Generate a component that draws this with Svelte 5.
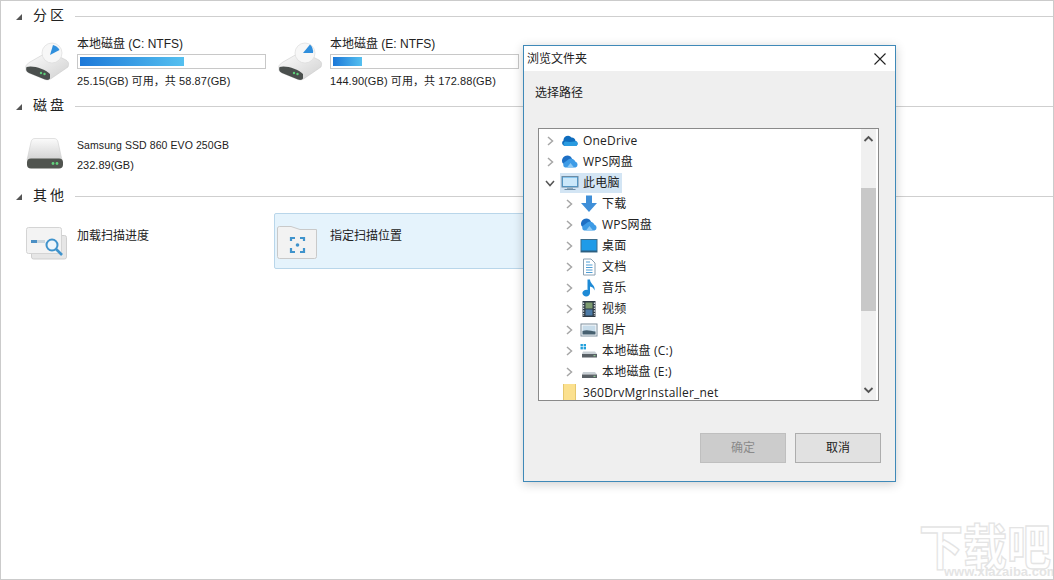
<script>
  const parts = [
    { name: '本地磁盘 (C: NTFS)', pct: 56.8, sub: '25.15(GB) 可用，共 58.87(GB)', wedge: 'M26 13 L29 3 A10 10 0 0 1 35.500 8 Z' },
    { name: '本地磁盘 (E: NTFS)', pct: 15.7, sub: '144.90(GB) 可用，共 172.88(GB)', wedge: 'M26 11 L33 2.500 A10 10 0 0 1 36 11 Z' }
  ];
  const rows = [
    { level: 0, kind: 'onedrive', label: 'OneDrive' },
    { level: 0, kind: 'wps', label: 'WPS网盘' },
    { level: 0, kind: 'pc', label: '此电脑', open: true, selected: true },
    { level: 1, kind: 'down', label: '下载' },
    { level: 1, kind: 'wps', label: 'WPS网盘' },
    { level: 1, kind: 'desk', label: '桌面' },
    { level: 1, kind: 'doc', label: '文档' },
    { level: 1, kind: 'music', label: '音乐' },
    { level: 1, kind: 'video', label: '视频' },
    { level: 1, kind: 'pic', label: '图片' },
    { level: 1, kind: 'drivec', label: '本地磁盘 (C:)' },
    { level: 1, kind: 'drivee', label: '本地磁盘 (E:)' },
    { level: 0, kind: 'folder', label: '360DrvMgrInstaller_net', leaf: true }
  ];
</script>

{#snippet tri()}
  <svg class="tri" width="6" height="6" viewBox="0 0 6 6"><path d="M0 6 L6 0 V6 Z" fill="#555" /></svg>
{/snippet}

{#snippet head(title)}
  <div class="head">
    {@render tri()}
    <span class="htitle">{title}</span>
    <span class="hline"></span>
  </div>
{/snippet}

{#snippet treeIcon(kind)}
  <svg class="ti" width="18" height="18" viewBox="0 0 18 18">
    {#if kind === 'onedrive'}
      <path d="M3.500 14 A3 3 0 0 1 2.500 8.500 A4.500 4.500 0 0 1 10.500 5.500 A4 4 0 0 1 14.500 9 A2.600 2.600 0 0 1 15 14 Z" fill="#0f6cbd" />
      <path d="M3.500 14 A2.800 2.800 0 0 1 4 9.500 L9 10 L15 9.200 A2.600 2.600 0 0 1 15 14 Z" fill="#2a9be0" />
    {:else if kind === 'wps'}
      <path d="M1.500 10 A5 5 0 0 1 11 5.500 L9 9 L6 13 Z" fill="#1d6fc4" />
      <path d="M4 14.500 A3 3 0 0 1 4 9 L8 6 A4.800 4.800 0 0 1 14.500 8.800 A3 3 0 0 1 14.500 14.500 Z" fill="#3d9be6" />
      <path d="M6 14.500 L9.500 10 L13 14.500 Z" fill="#8cc8f3" />
    {:else if kind === 'pc'}
      <rect x="1" y="2.500" width="16" height="10.500" fill="#3ea0e0" stroke="#6d8ba3" stroke-width="1" />
      <rect x="2" y="3.500" width="14" height="8.500" fill="#cbe8fa" />
      <rect x="6" y="13.500" width="6" height="1.500" fill="#8fa9bb" />
      <rect x="3.500" y="15" width="11" height="1" fill="#6d8ba3" />
    {:else if kind === 'down'}
      <path d="M6 0.500 H12 V8 H17 L9 17 L1 8 H6 Z" fill="#3f8fd8" />
    {:else if kind === 'desk'}
      <rect x="1" y="2.500" width="16" height="12.500" fill="#1f9be8" stroke="#3c6d8c" stroke-width="1" />
      <rect x="1" y="13.500" width="16" height="1.500" fill="#2d5f80" />
    {:else if kind === 'doc'}
      <path d="M3.500 1 H11 L15 5 V17 H3.500 Z" fill="#fff" stroke="#8aa0b2" />
      <path d="M6 4 H10 M6 7 H12.500 M6 9.500 H12.500 M6 12 H12.500 M6 14.500 H12.500" stroke="#4f9ed6" stroke-width="1" />
    {:else if kind === 'music'}
      <path d="M7.500 0.500 H10 C10 5 15.500 6 14.500 11.500 C13.500 8.500 12 8 10 7.500 V14 A3.800 3.300 0 1 1 7.500 11 Z" fill="#1e8ad6" />
    {:else if kind === 'video'}
      <rect x="2.500" y="1" width="13" height="16" fill="#2f3b45" />
      <rect x="5.500" y="2.500" width="7" height="6" fill="#7d9b70" />
      <rect x="5.500" y="9.500" width="7" height="6" fill="#4d7ba6" />
      <path d="M3.500 2.500 V16 M14.500 2.500 V16" stroke="#cfd6dc" stroke-width="1.400" stroke-dasharray="1.400 1.200" />
    {:else if kind === 'pic'}
      <rect x="1" y="3" width="16" height="12" fill="#fff" stroke="#7f909e" />
      <rect x="2.500" y="4.500" width="13" height="9" fill="#c7dcea" />
      <path d="M2.500 13.500 V10 C7 8 11 10 15.500 10.500 V13.500 Z" fill="#47606f" />
    {:else if kind === 'drivec'}
      <rect x="0.500" y="2" width="2.400" height="2.400" fill="#22a0dc" /><rect x="3.600" y="2" width="2.400" height="2.400" fill="#22a0dc" />
      <rect x="0.500" y="5" width="2.400" height="2.400" fill="#22a0dc" /><rect x="3.600" y="5" width="2.400" height="2.400" fill="#22a0dc" />
      <path d="M3 9.500 H15 L17 12 H2 Z" fill="#c9d0d5" />
      <rect x="2" y="12" width="15" height="3.500" fill="#5a6166" />
      <rect x="13.500" y="13.200" width="2" height="1" fill="#9fe0a0" />
    {:else if kind === 'drivee'}
      <path d="M3 9 H15 L17 11.500 H2 Z" fill="#c9d0d5" />
      <rect x="2" y="11.500" width="15" height="3.500" fill="#5a6166" />
      <rect x="13.500" y="12.800" width="2" height="1" fill="#9fe0a0" />
    {:else}
      <path d="M2 0 H15 V18 H2 Z" fill="#fbe08e" />
      <path d="M2 0 H3 V18 H2 Z M14 0 H15 V18 H14 Z" fill="#e5c76d" />
    {/if}
  </svg>
{/snippet}

<div class="page">
  <section>
    {@render head('分区')}
    <div class="items">
      {#each parts as p}
        <div class="item">
          <svg class="ico part-ico" width="48" height="40" viewBox="0 0 48 40">
            <defs>
              <linearGradient id="hd" x1="0" y1="0" x2="1" y2="1">
                <stop offset="0" stop-color="#fdfdfd" /><stop offset="1" stop-color="#d0d0d0" />
              </linearGradient>
            </defs>
            <path d="M2 26 C1 24 3 22 6 20 L20 12 C23 10.500 26 11 30 12 L42 18 C45 20 45 22 44 25 L28 36 C26 37.500 24 38.500 21 37.500 L5 31 C2.500 30 1.500 28 2 26 Z" fill="url(#hd)" stroke="#c4c4c4" stroke-width=".5" />
            <path d="M2.500 25 C9 23 21 27 26 32 L26 36.500 C24 38.500 23 38 21 37.500 L5 31 C2.500 30 1.500 28 2.500 25 Z" fill="#4a4f4d" />
            <circle cx="17" cy="31" r="1.200" fill="#5fd07a" />
            <circle cx="20.500" cy="32" r="1.200" fill="#5fd07a" />
            <circle cx="28" cy="11" r="10" fill="#f7f7f7" stroke="#dcdcdc" stroke-width=".7" />
            <path d={p.wedge} fill="#2f8fdd" />
          </svg>
          <div class="txt part-txt">
            <div class="name">{p.name}</div>
            <div class="bar"><span class="fill" style="width:{p.pct}%"></span></div>
            <div class="sub">{p.sub}</div>
          </div>
        </div>
      {/each}
    </div>
  </section>

  <section>
    {@render head('磁盘')}
    <div class="items">
      <div class="item">
        <svg class="ico disk-ico" width="38" height="32" viewBox="0 0 38 32">
          <defs>
            <linearGradient id="dk" x1="0" y1="0" x2="0" y2="1">
              <stop offset="0" stop-color="#fbfbfb" /><stop offset="1" stop-color="#d2d2d2" />
            </linearGradient>
          </defs>
          <path d="M5 4 C5.500 1.500 7 .5 9 .5 H28 C30 .5 31.500 1.500 32 4 L36 22 H1 Z" fill="url(#dk)" stroke="#cfcfcf" stroke-width=".6" />
          <rect x="1" y="20.500" width="36" height="10" rx="4" fill="#50544f" />
          <circle cx="27" cy="25.500" r="1.400" fill="#62d27d" />
          <circle cx="31" cy="25.500" r="1.400" fill="#62d27d" />
        </svg>
        <div class="txt disk-txt">
          <div class="dname">Samsung SSD 860 EVO 250GB</div>
          <div class="dsub">232.89(GB)</div>
        </div>
      </div>
    </div>
  </section>

  <section>
    {@render head('其他')}
    <div class="items">
      <div class="item">
        <svg class="ico other-ico" width="42" height="34" viewBox="0 0 42 34">
          <rect x="6.500" y="9.500" width="35" height="23.500" rx="2" fill="#e6e6e6" stroke="#cfcfcf" />
          <rect x="1.500" y="1.500" width="35" height="26" rx="2" fill="#f3f3f3" stroke="#d4d4d4" />
          <rect x="6" y="14" width="6" height="3" fill="#4a8fc4" />
          <rect x="12" y="14" width="8" height="3" fill="#c9d5dd" />
          <circle cx="27" cy="19" r="5.500" fill="#eef6fb" stroke="#3f93cc" stroke-width="2" />
          <path d="M31 23 L37 29" stroke="#3f93cc" stroke-width="2.600" />
        </svg>
        <div class="txt other-txt">加载扫描进度</div>
      </div>
      <div class="item active">
        <svg class="ico other-ico folder-ico" width="42" height="34" viewBox="0 0 42 34">
          <path d="M.5 2 A2 2 0 0 1 2.500 .5 H14 L23 3.500 H39.500 V30.500 A2 2 0 0 1 37.500 32.500 H2.500 A2 2 0 0 1 .5 30.500 Z" fill="#f2f2f2" stroke="#c9c9c9" />
          <path d="M14 15 V12 H18 M23 12 H27 V15 M14 22 V26 H18 M23 26 H27 V22" fill="none" stroke="#3f93cc" stroke-width="2.200" />
          <circle cx="20.500" cy="19" r="1.800" fill="#3f93cc" />
        </svg>
        <div class="txt other-txt">指定扫描位置</div>
      </div>
    </div>
  </section>

  <div class="mark" aria-hidden="true">
    <div class="mark-big">下载吧</div>
    <div class="mark-url">www.xiazaiba.com</div>
  </div>

  <div class="dialog">
    <div class="dtitle">
      <span>浏览文件夹</span>
      <svg width="12" height="12" viewBox="0 0 12 12"><path d="M.5 .5 L11.500 11.500 M11.500 .5 L.5 11.500" stroke="#222" stroke-width="1.100" /></svg>
    </div>
    <div class="dbody">
      <div class="dlabel">选择路径</div>
      <div class="tree">
        <div class="rows">
          {#each rows as r}
            <div class="row" class:sub1={r.level === 1}>
              <span class="chev">
                {#if !r.leaf}
                  <svg width="10" height="10" viewBox="0 0 10 10">
                    {#if r.open}
                      <path d="M1 3 L5 7.500 L9 3" fill="none" stroke="#555" stroke-width="1.500" />
                    {:else}
                      <path d="M3 1 L7.500 5 L3 9" fill="none" stroke="#a6a6a6" stroke-width="1.500" />
                    {/if}
                  </svg>
                {/if}
              </span>
              <span class="rlabel" class:sel={r.selected}>
                {@render treeIcon(r.kind)}
                <span class="rtext">{r.label}</span>
              </span>
            </div>
          {/each}
        </div>
        <div class="sbar">
          <svg class="arr" width="15" height="20" viewBox="0 0 15 20"><path d="M3.500 12 L7.500 8 L11.500 12" fill="none" stroke="#555" stroke-width="1.800" /></svg>
          <div class="thumb"></div>
          <span class="sp"></span>
          <svg class="arr" width="15" height="20" viewBox="0 0 15 20"><path d="M3.500 8 L7.500 12 L11.500 8" fill="none" stroke="#555" stroke-width="1.800" /></svg>
        </div>
      </div>
      <div class="btns">
        <div class="btn dis">确定</div>
        <div class="btn">取消</div>
      </div>
    </div>
  </div>
</div>

<style>
  :global(body) { margin: 0; background: #fff; }
  .page {
    position: relative; box-sizing: border-box; width: 1054px; height: 580px; overflow: hidden;
    background: #fff; border: 1px solid #cbcbcb; padding-top: 5px; color: #222;
    font: 12px/18px "Liberation Sans", "Noto Sans CJK SC", sans-serif;
  }
  section { height: 90px; }
  .head { display: flex; align-items: center; height: 20px; padding-left: 15px; }
  .tri { flex: none; margin-top: 1px; }
  .htitle { margin-left: 11px; width: 42px; padding-bottom: 2px; font-size: 14px; letter-spacing: 3px; white-space: nowrap; }
  .hline { flex: 1; height: 1px; background: #cfcfcf; }
  .items { display: grid; grid-template-columns: repeat(3, 253px); margin: 7px 0 0 20px; }
  .item {
    display: flex; box-sizing: border-box; height: 56px; padding-left: 3px;
    border: 1px solid transparent; border-radius: 2px;
  }
  .item.active { background: #e5f3fc; border-color: #b9d6ea; }
  .ico { flex: none; display: block; }
  .part-ico { margin: 8px 5px 0 -1px; }
  .disk-ico { margin: 14px 13px 0 1px; }
  .other-ico { margin: 12px 10px 0 0; }
  .folder-ico { margin-left: -1px; margin-right: 11px; }
  .txt { min-width: 0; }
  .part-txt { padding-top: 1px; }
  .name { height: 19px; white-space: nowrap; }
  .bar { box-sizing: border-box; width: 189px; height: 15px; padding: 2px; border: 1px solid #c8c8c8; background: #fff; }
  .fill { display: block; height: 100%; background: linear-gradient(90deg, #1c78d8, #55c0f0); }
  .sub { margin-top: 3px; font-size: 11px; letter-spacing: .08px; white-space: nowrap; }
  .disk-txt { padding-top: 12px; font-size: 11px; }
  .dname { font-size: 10.500px; letter-spacing: .08px; white-space: nowrap; }
  .dsub { margin-top: 2px; }
  .other-txt { padding-top: 13px; white-space: nowrap; }

  .mark { position: absolute; right: 1px; bottom: 1px; width: 133px; }
  .mark-big {
    font: 700 44px/44px "Noto Sans CJK SC", sans-serif; color: transparent;
    -webkit-text-stroke: 1.200px #e4e4e4; white-space: nowrap; transform: scaleY(1.12);
  }
  .mark-url { position: relative; font: 700 13px/12px "Liberation Sans", sans-serif; color: #e4e4e4; padding-left: 25px; white-space: nowrap; }

  .dialog {
    position: absolute; left: 522px; top: 44px; box-sizing: border-box; width: 373px; height: 437px;
    display: flex; flex-direction: column; border: 1px solid #3f89b8; background: #efefef;
    box-shadow: 0 2px 10px rgba(0,0,0,.2);
    font: 12px/18px "Liberation Sans", "Noto Sans CJK SC", sans-serif; color: #222;
  }
  .dtitle { box-sizing: border-box; display: flex; align-items: center; justify-content: space-between; height: 25px; padding: 0 9px 0 3px; background: #fff; }
  .dbody { flex: 1; padding: 13px 14px 0 14px; }
  .dlabel { height: 18px; margin-left: -3px; }
  .tree { box-sizing: border-box; display: flex; width: 341px; height: 273px; margin-top: 26px; border: 1px solid #8a8a8a; background: #fff; overflow: hidden; }
  .rows { flex: 1; padding-top: 1px; min-width: 0; overflow: hidden; }
  .row { display: flex; align-items: center; height: 21px; padding-left: 6px; white-space: nowrap; }
  .row.sub1 { padding-left: 25px; }
  .chev { flex: none; display: flex; width: 10px; height: 10px; margin-right: 5px; }
  .rlabel { display: flex; align-items: center; height: 20px; padding: 0 2px 0 1px; }
  .rlabel.sel { background: #d3e5f4; }
  .ti { flex: none; display: block; }
  .rtext { margin-left: 4px; font-family: "Open Sans", "Noto Sans CJK SC", sans-serif; letter-spacing: .2px; }
  .sbar { flex: none; display: flex; flex-direction: column; width: 15px; margin-right: 2px; background: #f0f0f0; }
  .arr { flex: none; display: block; }
  .thumb { flex: none; height: 123px; margin-top: 39px; background: #c8c8c8; }
  .sp { flex: 1; }
  .btns { display: flex; justify-content: flex-end; gap: 9px; margin: 32px 0 0; }
  .btn { box-sizing: border-box; width: 86px; height: 30px; line-height: 28px; text-align: center; background: #e1e1e1; border: 1px solid #adadad; }
  .btn.dis { background: #cccccc; border-color: #bfbfbf; color: #8a8a8a; }
</style>
